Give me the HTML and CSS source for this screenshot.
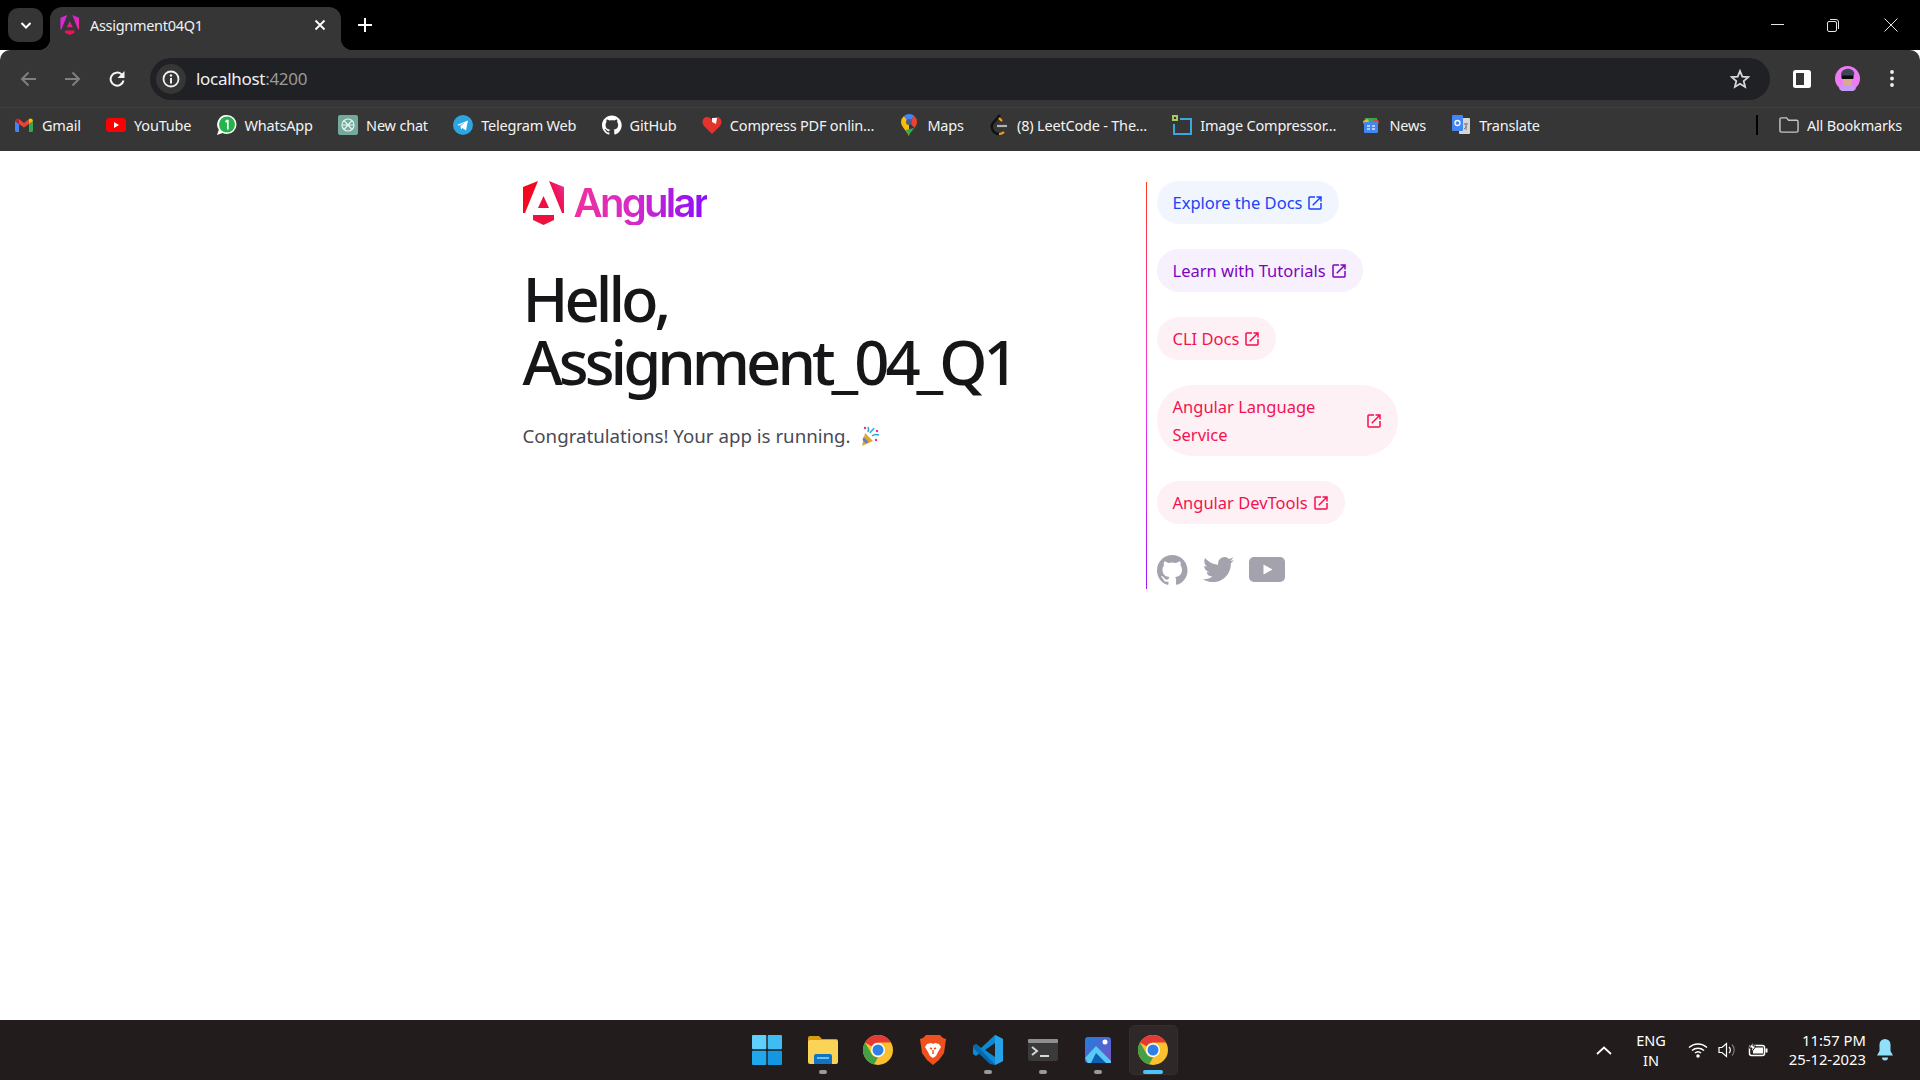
FILE: index.html
```html
<!DOCTYPE html>
<html lang="en">
<head>
  <meta charset="UTF-8" />
  <title>Assignment04Q1</title>
  <link rel="stylesheet" href="styles.css">
</head>
<body>

  <svg class="defs" width="0" height="0">
    <defs>
      <linearGradient id="shieldLeft" x1="0" y1="0" x2="1" y2="1">
        <stop offset="0" stop-color="#f5060f"/>
        <stop offset="1" stop-color="#ee1040"/>
      </linearGradient>
      <linearGradient id="shieldRight" x1="1" y1="0" x2="0" y2="1">
        <stop offset="0" stop-color="#e832a8"/>
        <stop offset="0.5" stop-color="#f0104f"/>
        <stop offset="1" stop-color="#f0103a"/>
      </linearGradient>
      <linearGradient id="favTop" x1="0" y1="0" x2="1" y2="1">
        <stop offset="0" stop-color="#c425e0"/>
        <stop offset="1" stop-color="#f52a9c"/>
      </linearGradient>
      <symbol id="chromeLogo" viewBox="0 0 30 30">
        <circle cx="15" cy="15" r="15" fill="#fbc02d"/>
        <path d="M15 0A15 15 0 0 1 28 7.500H15A7.500 7.500 0 0 0 8.500 11.300L2 7.500A15 15 0 0 1 15 0Z" fill="#e53935"/>
        <path d="M2 7.500L8.500 18.700A7.500 7.500 0 0 0 15 22.500L11 29.500A15 15 0 0 1 2 7.500Z" fill="#43a047"/>
        <circle cx="15" cy="15" r="7" fill="#fff"/>
        <circle cx="15" cy="15" r="5.500" fill="#2f7fe6"/>
      </symbol>
      <symbol id="extLink" viewBox="0 -960 960 960">
        <path fill="currentColor" d="M200-120q-33 0-56.500-23.500T120-200v-560q0-33 23.500-56.500T200-840h280v80H200v560h560v-280h80v280q0 33-23.500 56.500T760-120H200Zm188-212-56-56 372-372H560v-80h280v280h-80v-144L388-332Z"/>
      </symbol>
      <symbol id="githubMark" viewBox="0 0 25 24">
        <path fill="currentColor" d="M12.3047 0C5.50634 0 0 5.50942 0 12.3047C0 17.7423 3.52529 22.3535 8.41332 23.9787C9.02856 24.0946 9.25414 23.7142 9.25414 23.3871C9.25414 23.0949 9.24389 22.3207 9.23876 21.2953C5.81601 22.0377 5.09414 19.6444 5.09414 19.6444C4.53427 18.2243 3.72524 17.8449 3.72524 17.8449C2.61064 17.082 3.81137 17.0973 3.81137 17.0973C5.04697 17.1835 5.69604 18.3653 5.69604 18.3653C6.79321 20.2463 8.57636 19.7029 9.27978 19.3881C9.39052 18.5924 9.70736 18.0499 10.0591 17.7423C7.32641 17.4347 4.45429 16.3765 4.45429 11.6618C4.45429 10.3185 4.9311 9.22133 5.72065 8.36C5.58222 8.04931 5.16694 6.79833 5.82831 5.10337C5.82831 5.10337 6.85883 4.77318 9.21216 6.36461C10.1964 6.09103 11.2505 5.95465 12.3047 5.94952C13.3588 5.95465 14.4129 6.09103 15.3972 6.36461C17.7505 4.77318 18.7811 5.10337 18.7811 5.10337C19.4424 6.79833 19.0271 8.04931 18.9092 8.36C19.6931 9.22133 20.1699 10.3185 20.1699 11.6618C20.1699 16.3888 17.2978 17.4347 14.5599 17.7423C14.9978 18.1117 15.3836 18.8714 15.3836 20.0199C15.3836 21.6651 15.3682 22.9931 15.3682 23.3871C15.3682 23.7142 15.5884 24.0946 16.2138 23.9787C21.0842 22.3535 24.6094 17.7423 24.6094 12.3047C24.6094 5.50942 19.0999 0 12.3047 0Z"/>
      </symbol>
    </defs>
  </svg>

  <!-- tab strip -->
  <div class="tabstrip">
    <div class="tab-search">
      <svg width="14" height="14" viewBox="0 0 14 14"><path d="M2.500 5l4.500 4.500L11.500 5" fill="none" stroke="#fff" stroke-width="2"/></svg>
    </div>
    <div class="tab">
      <svg class="tab-favicon" width="20" height="20" viewBox="0 0 42 44">
        <path d="M0 6L15 0L2 32H0Z" fill="#d62ad8"/>
        <path d="M26 0L41 6V32H39Z" fill="url(#favTop)"/>
        <path d="M10 34H31V39L20.500 44L10 39Z" fill="#f01060"/>
        <path d="M20.500 14L27 27H14Z" fill="#e8208c"/>
      </svg>
      <span class="tab-title">Assignment04Q1</span>
      <svg class="tab-close" width="12" height="12" viewBox="0 0 12 12"><path d="M1.500 1.500l9 9M10.500 1.500l-9 9" stroke="#fff" stroke-width="1.800"/></svg>
    </div>
    <svg class="new-tab" width="14" height="14" viewBox="0 0 14 14"><path d="M7 0v14M0 7h14" stroke="#fff" stroke-width="2"/></svg>
    <div class="window-controls">
      <svg class="win-min" width="13" height="13" viewBox="0 0 13 13"><path d="M0 6.500h13" stroke="#e6e6e6"/></svg>
      <svg width="14" height="14" viewBox="0 0 14 14" fill="none" stroke="#e6e6e6"><rect x="1.500" y="3.500" width="9" height="10" rx="1.500"/><path d="M4 1.500h6a2.500 2.500 0 0 1 2.500 2.500v7"/></svg>
      <svg width="14" height="14" viewBox="0 0 14 14"><path d="M.5.500l13 13M13.500.500l-13 13" stroke="#e6e6e6"/></svg>
    </div>
  </div>

  <!-- address bar -->
  <div class="toolbar">
    <div class="nav-buttons">
      <svg width="16" height="16" viewBox="0 0 16 16" fill="none" stroke="#7f7f7f" stroke-width="2"><path d="M16 8H2M8.500 1.500L2 8l6.500 6.500"/></svg>
      <svg width="16" height="16" viewBox="0 0 16 16" fill="none" stroke="#7f7f7f" stroke-width="2"><path d="M0 8h14M7.500 1.500L14 8l-6.500 6.500"/></svg>
      <svg width="16" height="16" viewBox="0 0 16 16" fill="none" stroke="#f5f5f5" stroke-width="2"><path d="M14.500 9.500A6.500 6.500 0 1 1 12.500 3.300"/><path d="M15.500 0v7H8.500Z" fill="#f5f5f5" stroke="none"/></svg>
    </div>
    <div class="omnibox">
      <div class="site-info">
        <svg width="18" height="18" viewBox="0 0 18 18"><circle cx="9" cy="9" r="7.500" fill="none" stroke="#f0f0f0" stroke-width="1.800"/><path d="M9 8v5.500" stroke="#f0f0f0" stroke-width="2"/><circle cx="9" cy="5.500" r="1.200" fill="#f0f0f0"/></svg>
      </div>
      <span class="url">localhost<span class="url-port">:4200</span></span>
      <svg class="star" width="20" height="20" viewBox="0 0 20 20"><path d="M10 2l2.300 5.600 6 .5-4.600 3.900 1.400 5.900L10 14.800 4.900 17.900l1.400-5.900L1.700 8.100l6-.5Z" fill="none" stroke="#d8d8d8" stroke-width="1.800"/></svg>
    </div>
    <div class="toolbar-right">
      <svg width="18" height="18" viewBox="0 0 18 18"><rect width="18" height="18" rx="2.500" fill="#fff"/><rect x="3" y="3" width="8" height="12" fill="#363636"/></svg>
      <svg class="avatar" width="25" height="25" viewBox="0 0 25 25">
        <circle cx="12.500" cy="12.500" r="12.500" fill="#ec7df0"/>
        <path d="M4 23c2-4 5-6 8.500-6s6.500 2 8.500 6a12.500 12.500 0 0 1-17 0Z" fill="#c79af5"/>
        <path d="M8 11h9v4c0 3-2 5-4.500 5S8 18 8 15Z" fill="#d9ab8e"/>
        <path d="M6 9c0-5 5-7 9-6 3 1 5 3 4 6l-1 2H7Z" fill="#3d4656"/>
        <rect x="6.500" y="9.500" width="12" height="3.500" rx="1" fill="#0c0c0e"/>
      </svg>
      <svg width="4" height="17" viewBox="0 0 4 17" fill="#f0f0f0"><circle cx="2" cy="2" r="1.900"/><circle cx="2" cy="8.500" r="1.900"/><circle cx="2" cy="15" r="1.900"/></svg>
    </div>
  </div>

  <!-- bookmarks -->
  <div class="bookmarks">
    <div class="bm bm-gmail">
      <svg width="18" height="14" viewBox="0 0 18 14"><path d="M0 3v9.500A1.500 1.500 0 0 0 1.500 14H4V6Z" fill="#4285f4"/><path d="M14 6v8h2.500a1.500 1.500 0 0 0 1.500-1.500V3Z" fill="#34a853"/><path d="M4 6V1L9 5l5-4v5L9 9.500Z" fill="#ea4335"/><path d="M0 3c0-2 2.500-3.500 4-2v5Z" fill="#c5221f"/><path d="M18 3c0-2-2.500-3.500-4-2v5Z" fill="#fbbc04"/></svg>
      <span>Gmail</span>
    </div>
    <div class="bm bm-youtube">
      <svg width="20" height="14" viewBox="0 0 20 14"><rect width="20" height="14" rx="3.500" fill="#f00"/><path d="M8 4l5 3-5 3Z" fill="#fff"/></svg>
      <span>YouTube</span>
    </div>
    <div class="bm bm-whatsapp">
      <svg width="20" height="20" viewBox="0 0 20 20"><path d="M10 0a9.500 9.500 0 0 1 0 19 9.500 9.500 0 0 1-4.500-1.100L0 20l1.800-5.200A9.500 9.500 0 0 1 10 0Z" fill="#fff"/><circle cx="10" cy="9.500" r="8" fill="#25b34b"/><path d="M10.800 5v9.500M8.500 7l2.300-2" stroke="#fff" stroke-width="1.700" fill="none"/></svg>
      <span>WhatsApp</span>
    </div>
    <div class="bm bm-chat">
      <svg width="20" height="20" viewBox="0 0 20 20"><rect width="20" height="20" rx="2" fill="#74aa9c"/><g fill="none" stroke="#e6f2ee" stroke-width="1.200"><circle cx="10" cy="10" r="6"/><path d="M6 5.500l8 9M14 5.500l-8 9M4 10h12"/></g></svg>
      <span>New chat</span>
    </div>
    <div class="bm bm-telegram">
      <svg width="20" height="20" viewBox="0 0 20 20"><circle cx="10" cy="10" r="10" fill="#2ca5e0"/><path d="M4 10l11-4.500-2 10-3.500-2.500-1.500 1.500-.500-3.500 5-4-6 3.500Z" fill="#fff"/></svg>
      <span>Telegram Web</span>
    </div>
    <div class="bm bm-github">
      <svg class="mark-white" width="20" height="20"><use href="#githubMark"/></svg>
      <span>GitHub</span>
    </div>
    <div class="bm bm-compress">
      <svg width="20" height="20" viewBox="0 0 20 20"><path d="M10 19L2 11C-1 7 1 2 5 2c2 0 4 1 5 3 1-2 3-3 5-3 4 0 6 5 3 9Z" fill="#e5322d"/><path d="M10 3h5l-1 6-4-2Z" fill="#fff"/></svg>
      <span>Compress PDF onlin...</span>
    </div>
    <div class="bm bm-maps">
      <svg width="16" height="22" viewBox="0 0 16 22"><path d="M8 22C6 17 0 13 0 8a8 8 0 0 1 3-6l5 6Z" fill="#fbbc04"/><path d="M3 2a8 8 0 0 1 5-2 8 8 0 0 1 5.500 2L8 8Z" fill="#4285f4"/><path d="M13.500 2A8 8 0 0 1 16 8c0 2-1 4-2.500 6L8 8Z" fill="#ea4335"/><path d="M8 22c-.5-2-2-4-3.500-6L13.500 14c-2 3-5 5-5.500 8Z" fill="#34a853"/><circle cx="8" cy="8" r="3" fill="#4a5a8c"/></svg>
      <span>Maps</span>
    </div>
    <div class="bm bm-leetcode">
      <svg width="18" height="22" viewBox="0 0 18 22" fill="none"><path d="M10 1L3 9c-3 4 0 11 6 11" stroke="#111" stroke-width="2.500"/><path d="M12 7L9 4M9 20c3 0 4-1 5-2" stroke="#f89f1b" stroke-width="2.200"/><path d="M7 12h10" stroke="#b3b3b3" stroke-width="2.200"/></svg>
      <span>(8) LeetCode - The...</span>
    </div>
    <div class="bm bm-image">
      <svg width="20" height="20" viewBox="0 0 20 20"><path d="M8 4h11v15H2V9" fill="none" stroke="#3ba7dc" stroke-width="2"/><rect x="0" y="0" width="6" height="6" fill="#a5c95c"/><rect x="2" y="2" width="2" height="2" fill="#363636"/></svg>
      <span>Image Compressor...</span>
    </div>
    <div class="bm bm-news">
      <svg width="18" height="18" viewBox="0 0 18 18"><path d="M3 2l12 0 1 6H2Z" fill="#34a853"/><path d="M1 5l5-2 2 6H2Z" fill="#fbbc04"/><path d="M17 5l-5-2-2 6h6Z" fill="#ea4335"/><rect x="2" y="6" width="14" height="11" rx="1" fill="#4285f4"/><path d="M5 10h3M5 13h3M10 10h3M10 13h3" stroke="#dbe8ff" stroke-width="1.500"/></svg>
      <span>News</span>
    </div>
    <div class="bm bm-translate">
      <svg width="18" height="20" viewBox="0 0 18 20"><rect x="7" y="3" width="11" height="16" rx="1" fill="#d6d6d6"/><rect x="0" y="0" width="11" height="16" rx="1" fill="#4285f4"/><circle cx="5.500" cy="8" r="2.500" fill="none" stroke="#fff" stroke-width="1.300"/><path d="M12 9h4M14 8v7M12 14l3-3" stroke="#777" stroke-width="1"/></svg>
      <span>Translate</span>
    </div>
    <div class="bm-spacer"></div>
    <div class="bm-divider"></div>
    <div class="bm bm-all">
      <svg width="21" height="18" viewBox="0 0 21 18"><path d="M1 3a1.500 1.500 0 0 1 1.500-1.500H8L10 4h8.500A1.500 1.500 0 0 1 20 5.500V15a1.500 1.500 0 0 1-1.500 1.500h-16A1.500 1.500 0 0 1 1 15Z" fill="none" stroke="#c4c7c5" stroke-width="1.500"/></svg>
      <span>All Bookmarks</span>
    </div>
  </div>

  <!-- the page itself -->
  <main class="main">
    <div class="content">
      <div class="left-side">
        <div class="logo">
          <svg width="42" height="44" viewBox="0 0 42 44">
            <path d="M0 6L15 0L2 32H0Z" fill="url(#shieldLeft)"/>
            <path d="M26 0L41 6V32H39Z" fill="url(#shieldRight)"/>
            <path d="M10 34H31V39L20.500 44L10 39Z" fill="#ee1040"/>
            <path d="M20.500 15L26 27H15Z" fill="#ee1040"/>
          </svg>
          <span class="wordmark">Angular</span>
        </div>
        <h1>Hello, Assignment_04_Q1</h1>
        <p class="running">Congratulations! Your app is running.
          <svg class="party" width="20" height="20" viewBox="0 0 20 20">
            <path d="M5 7l8 8-11 5Z" fill="#e5a52c"/>
            <path d="M3.500 11l5 5-2.500 1.500-3.500-3.500Z" fill="#5f7fc8"/>
            <path d="M8 6c1-2 1-3 0-5M12 10c2-2 4-2 7-1M10 7c1-2 3-3 4-5" fill="none" stroke="#25a9e0" stroke-width="1.500"/>
            <circle cx="5" cy="2" r="1.200" fill="#e8308c"/>
            <circle cx="16" cy="14" r="1.200" fill="#e8308c"/>
            <circle cx="17" cy="5" r="1.200" fill="#e8308c"/>
          </svg>
        </p>
      </div>
      <div class="divider"></div>
      <div class="right-side">
        <div class="pill-group">
          <a class="pill pill-blue"><span>Explore the Docs</span><svg width="18" height="18"><use href="#extLink"/></svg></a>
          <a class="pill pill-purple"><span>Learn with Tutorials</span><svg width="18" height="18"><use href="#extLink"/></svg></a>
          <a class="pill pill-red"><span>CLI Docs</span><svg width="18" height="18"><use href="#extLink"/></svg></a>
          <a class="pill pill-red pill-wrap"><span>Angular Language Service</span><svg width="18" height="18"><use href="#extLink"/></svg></a>
          <a class="pill pill-red"><span>Angular DevTools</span><svg width="18" height="18"><use href="#extLink"/></svg></a>
        </div>
        <div class="social-links">
          <svg width="31" height="30"><use href="#githubMark"/></svg>
          <svg width="31" height="31" viewBox="0 0 24 24"><path fill="currentColor" d="M24 4.557c-.883.392-1.832.656-2.828.775 1.017-.609 1.798-1.574 2.165-2.724-.951.564-2.005.974-3.127 1.195-.897-.957-2.178-1.555-3.594-1.555-3.179 0-5.515 2.966-4.797 6.045-4.091-.205-7.719-2.165-10.148-5.144-1.29 2.213-.669 5.108 1.523 6.574-.806-.026-1.566-.247-2.229-.616-.054 2.281 1.581 4.415 3.949 4.89-.693.188-1.452.232-2.224.084.626 1.956 2.444 3.379 4.6 3.419-2.07 1.623-4.678 2.348-7.29 2.04 2.179 1.397 4.768 2.212 7.548 2.212 9.142 0 14.307-7.721 13.995-14.646.962-.695 1.797-1.562 2.457-2.549z"/></svg>
          <svg width="36" height="25" viewBox="0 0 36 25"><rect width="36" height="25" rx="5" fill="currentColor"/><path d="M14.500 7.500l9 5-9 5Z" fill="#fff"/></svg>
        </div>
      </div>
    </div>
  </main>

  <!-- windows taskbar -->
  <footer class="taskbar">
    <div class="task-icons">
      <div class="task-item task-start">
        <svg width="30" height="30" viewBox="0 0 30 30"><rect width="14.300" height="14.300" rx="1" fill="#5fd0fb"/><rect x="15.700" width="14.300" height="14.300" rx="1" fill="#3fbcf4"/><rect y="15.700" width="14.300" height="14.300" rx="1" fill="#1fa8ec"/><rect x="15.700" y="15.700" width="14.300" height="14.300" rx="1" fill="#1497e2"/></svg>
      </div>
      <div class="task-item is-open">
        <svg width="30" height="28" viewBox="0 0 30 28"><path d="M0 2a2 2 0 0 1 2-2h9l3 3h14a2 2 0 0 1 2 2v6H0Z" fill="#d99e10"/><rect y="4" width="30" height="24" rx="2" fill="#fbd356"/><path d="M6 20a2 2 0 0 1 2-2h14a2 2 0 0 1 2 2v8H6Z" fill="#0f74c4"/><rect x="9" y="21" width="12" height="2" fill="#6cc0f0"/></svg>
      </div>
      <div class="task-item">
        <svg width="30" height="30"><use href="#chromeLogo"/></svg>
      </div>
      <div class="task-item">
        <svg width="26" height="30" viewBox="0 0 26 30"><path d="M6 0h14l3 3 3 1-2 14-5 7-6 5-6-5-5-7L0 4l3-1Z" fill="#f0501e"/><path d="M7 9l4-1 2 1 2-1 4 1 2 3-3 5-2 4-3 2-3-2-2-4-3-5Z" fill="#fff"/><path d="M10 13l2 1M16 13l-2 1M13 15v4" stroke="#f0501e" stroke-width="1.500"/></svg>
      </div>
      <div class="task-item is-open">
        <svg width="30" height="30" viewBox="0 0 30 30"><path d="M22 0l8 4v22l-8 4L8 17l-5 4-3-2V11l3-2 5 4Z" fill="#0b8bd6"/><path d="M22 8v14L12 15Z" fill="#232020"/><path d="M22 0l8 4v22l-8 4Z" fill="#26a3e8"/><path d="M0 11l3-2 19 21-5-1L0 13Z" fill="#0668ad"/></svg>
      </div>
      <div class="task-item is-open">
        <svg width="30" height="22" viewBox="0 0 30 22"><rect width="30" height="22" rx="2" fill="#3a3a3a"/><rect width="30" height="4" rx="1" fill="#8f8f8f"/><path d="M4 8l5 4-5 4" fill="none" stroke="#d8d8d8" stroke-width="2"/><path d="M12 17h9" stroke="#d8d8d8" stroke-width="2"/></svg>
      </div>
      <div class="task-item is-open">
        <svg width="26" height="26" viewBox="0 0 26 26"><defs><linearGradient id="photoSky" x1="0" y1="0" x2="1" y2="1"><stop offset="0" stop-color="#1f7fe0"/><stop offset="1" stop-color="#7b4fc4"/></linearGradient></defs><rect width="26" height="26" rx="3" fill="url(#photoSky)"/><circle cx="20" cy="5" r="2.500" fill="#fff"/><path d="M0 21L11 9l15 15v2H3Z" fill="#58c8f4"/><path d="M11 16l10 10H6Z" fill="#0e5fb4"/></svg>
      </div>
      <div class="task-item is-active">
        <svg width="30" height="30"><use href="#chromeLogo"/></svg>
      </div>
    </div>
    <div class="tray">
      <svg class="tray-up" width="16" height="9" viewBox="0 0 16 9"><path d="M1 8l7-6.500L15 8" fill="none" stroke="#fff" stroke-width="1.800"/></svg>
      <div class="tray-lang">ENG<br>IN</div>
      <svg width="20" height="16" viewBox="0 0 20 16" fill="none" stroke="#fff" stroke-width="1.500"><path d="M1 5.500a13 13 0 0 1 18 0M4 8.500a9 9 0 0 1 12 0M7 11a4.500 4.500 0 0 1 6 0"/><circle cx="10" cy="14" r="1" fill="#fff"/></svg>
      <svg width="20" height="16" viewBox="0 0 20 16" fill="none" stroke="#fff" stroke-width="1.200"><path d="M1 5.500h3L8.500 1.500v13L4 10.500H1Z"/><path d="M11 5a4 4 0 0 1 0 6"/><path d="M14 2.500a8 8 0 0 1 0 11" stroke="#777"/></svg>
      <svg width="20" height="16" viewBox="0 0 20 16"><rect x="1.500" y="3.500" width="15" height="10" rx="2" fill="none" stroke="#fff" stroke-width="1.500"/><rect x="5" y="5.500" width="10" height="6" fill="#fff"/><rect x="17.500" y="6.500" width="2" height="4" fill="#fff"/><path d="M5 0L1 6h3l-1 5 5-7H5Z" fill="#fff" stroke="#231c1c"/></svg>
      <div class="tray-clock">11:57 PM<br>25-12-2023</div>
      <svg class="tray-bell" width="16" height="22" viewBox="0 0 16 22"><path d="M8 0a5.500 5.500 0 0 1 5.500 5.500V12L16 16.500H0L2.500 12V5.500A5.500 5.500 0 0 1 8 0Z" fill="#8fe0fb"/><path d="M5 18.500h6a3 3 0 0 1-6 0Z" fill="#8fe0fb"/></svg>
    </div>
  </footer>

</body>
</html>
```

FILE: styles.css
```css
* {
  box-sizing: border-box;
}

html, body {
  height: 100%;
}

body {
  margin: 0;
  height: 1080px;
  overflow: hidden;
  display: flex;
  flex-direction: column;
  background: #fff;
  font-family: 'Noto Sans', 'Open Sans', sans-serif;
}

svg {
  flex: none;
  display: block;
}

.defs {
  position: absolute;
}

/* tab strip */
.tabstrip {
  height: 50px;
  flex: none;
  background: #000;
  display: flex;
  align-items: flex-start;
  padding: 8px 0 0 8px;
  color: #fff;
}

.tab-search {
  width: 35px;
  height: 34px;
  border-radius: 10px;
  background: #353535;
  display: flex;
  align-items: center;
  justify-content: center;
}

.tab {
  position: relative;
  width: 291px;
  height: 43px;
  margin: -1px 0 0 7px;
  padding: 0 15px 7px 10px;
  background: #363636;
  border-radius: 12px 12px 0 0;
  display: flex;
  align-items: center;
}

.tab::before,
.tab::after {
  content: "";
  position: absolute;
  bottom: 0;
  width: 12px;
  height: 12px;
}

.tab::before {
  left: -12px;
  background: radial-gradient(circle at 0 0, transparent 12px, #363636 12.500px);
}

.tab::after {
  right: -12px;
  background: radial-gradient(circle at 100% 0, transparent 12px, #363636 12.500px);
}

.tab-title {
  margin-left: 10px;
  font-size: 14.500px;
  letter-spacing: -0.300px;
  color: #f1f1f1;
  flex: 1;
}

.new-tab {
  margin: 10px 0 0 17px;
}

.window-controls {
  margin-left: auto;
  display: flex;
  gap: 44px;
  padding: 10px 22px 0 0;
}

.win-min {
  margin-right: -2px;
}

/* address bar */
.toolbar {
  height: 58px;
  flex: none;
  background: #363636;
  border-radius: 10px 10px 0 0;
  display: flex;
  align-items: center;
  padding: 0 0 0 20px;
  border-bottom: 1px solid #3e3e3e;
}

.nav-buttons {
  display: flex;
  gap: 28.500px;
}

.omnibox {
  width: 1620px;
  height: 42px;
  margin-left: 25px;
  background: #202124;
  border-radius: 21px;
  display: flex;
  align-items: center;
  padding: 0 20px 0 6px;
}

.site-info {
  width: 30px;
  height: 30px;
  border-radius: 50%;
  background: #363636;
  display: flex;
  align-items: center;
  justify-content: center;
}

.url {
  margin-left: 10px;
  font-size: 17px;
  letter-spacing: -0.300px;
  color: #f1f1f1;
}

.url-port {
  color: #9a9a9a;
}

.star {
  margin-left: auto;
}

.toolbar-right {
  display: flex;
  align-items: center;
  margin-left: 23px;
}

.avatar {
  margin: 0 30px 0 24px;
}

/* bookmarks */
.bookmarks {
  height: 43px;
  flex: none;
  background: #363636;
  display: flex;
  align-items: center;
  gap: 25.300px;
  padding: 0 18px 9px 14px;
}

.bm {
  display: flex;
  align-items: center;
  gap: 8px;
  font-size: 14.500px;
  letter-spacing: -0.200px;
  color: #f3f3f3;
  white-space: nowrap;
}

.bm > svg {
  width: 20px;
}

.mark-white {
  color: #fff;
}

.bm-spacer {
  flex: 1;
}

.bm-divider {
  width: 2px;
  height: 20px;
  background: #000;
  margin-right: -4px;
}

/* page */
.main {
  flex: 1;
  display: flex;
  justify-content: center;
  padding-top: 30px;
}

.content {
  width: 875px;
  display: flex;
  align-items: flex-start;
}

.left-side {
  width: 623px;
}

.logo {
  display: flex;
  align-items: center;
  gap: 9px;
  height: 44px;
}

.wordmark {
  font-family: Inter, sans-serif;
  font-size: 40px;
  font-weight: 600;
  letter-spacing: -2.700px;
  line-height: 44px;
  background: linear-gradient(90deg, #f0309c 0%, #d42bc8 45%, #8a0cff 100%);
  -webkit-background-clip: text;
  background-clip: text;
  color: transparent;
}

h1 {
  width: 500px;
  margin: 42px 0 0;
  font-size: 61.500px;
  font-weight: 500;
  line-height: 62.500px;
  letter-spacing: -4px;
  color: #161618;
}

.running {
  display: flex;
  align-items: center;
  gap: 9px;
  margin: 30px 0 0;
  font-size: 18.700px;
  line-height: 28px;
  color: #4a4a55;
}

.divider {
  width: 1.500px;
  height: 407px;
  margin-top: 1px;
  background: linear-gradient(180deg, #ff3a1e 0%, #f637e3 50%, #a017ff 100%);
}

.right-side {
  width: 250px;
  padding-left: 10px;
}

.pill-group {
  display: flex;
  flex-direction: column;
  align-items: flex-start;
  gap: 25px;
}

.pill {
  display: flex;
  align-items: center;
  gap: 4px;
  padding: 7.500px 15px 7.500px 15.500px;
  border-radius: 35px;
  font-size: 16.500px;
  line-height: 28px;
}

.pill-blue {
  background: #f1f5fe;
  color: #1a44f5;
}

.pill-purple {
  background: #f6f1fc;
  color: #7d04bf;
}

.pill-red {
  background: #fef1f5;
  color: #f4114f;
}

.pill-wrap {
  width: 241px;
  justify-content: space-between;
}

.pill-wrap span {
  width: 180px;
}

.social-links {
  display: flex;
  align-items: center;
  gap: 15px;
  margin-top: 30px;
  color: #a4a3ad;
}

/* taskbar */
.taskbar {
  height: 60px;
  flex: none;
  background: #231c1c;
  display: grid;
  grid-template-columns: 1fr auto 1fr;
  color: #fff;
}

.task-icons {
  grid-column: 2;
  display: flex;
  margin-right: -1px;
}

.task-item {
  position: relative;
  width: 55px;
  display: flex;
  align-items: center;
  justify-content: center;
}

.task-start svg {
  margin-right: 2px;
}

.task-item.is-open::after,
.task-item.is-active::after {
  content: "";
  position: absolute;
  bottom: 6px;
  left: 50%;
  width: 8px;
  height: 4px;
  margin-left: -4px;
  border-radius: 2px;
  background: #9a9a9a;
}

.task-item.is-active {
  background: #2f2828;
  border-radius: 5px;
  margin: 5px 3px;
  width: 49px;
  border: 1px solid #352e2e;
}

.task-item.is-active::after {
  width: 20px;
  margin-left: -10px;
  bottom: 0;
  background: #4cc2ff;
}

.tray {
  grid-column: 3;
  display: flex;
  align-items: center;
  justify-content: flex-end;
  gap: 10px;
  padding-right: 27px;
}

.tray-up {
  margin-right: 9px;
}

.tray-lang {
  width: 40px;
  margin-right: 7px;
  text-align: center;
  font-size: 14.500px;
  line-height: 20px;
}

.tray-clock {
  width: 88px;
  text-align: right;
  font-size: 14.800px;
  line-height: 19px;
  white-space: nowrap;
}

.tray-bell {
  margin-left: 1px;
}
```
